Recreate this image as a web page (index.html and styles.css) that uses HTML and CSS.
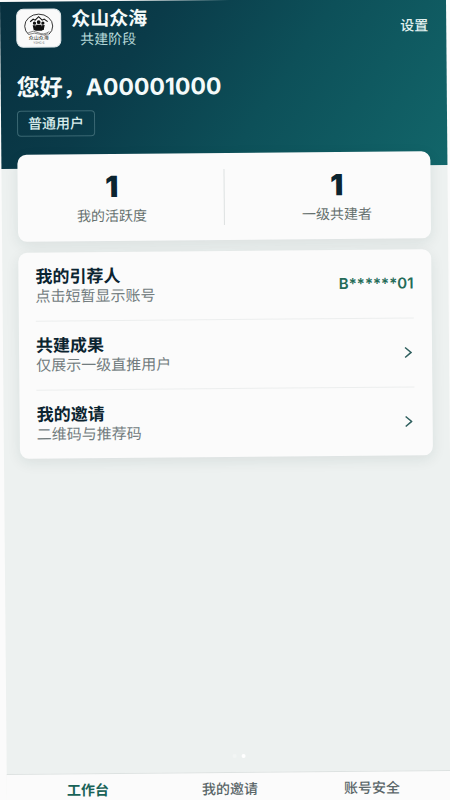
FILE: index.html
```html
<!DOCTYPE html>
<html lang="zh-CN">
<head>
    <meta charset="UTF-8">
    <meta name="viewport" content="width=device-width, initial-scale=1.0">
    <title>众山众海</title>
    <link rel="stylesheet" href="styles.css">
</head>
<body>
    <div class="app">
        <header class="hero">
            <div class="brand">
                <div class="logo">
                    <svg viewBox="0 0 45 39" width="45" height="39" aria-hidden="true">
                        <ellipse cx="22.500" cy="17.500" rx="14" ry="12" fill="none" stroke="#222" stroke-width="0.900"/>
                        <rect x="12" y="26" width="21" height="8" fill="#fafafa"/>
                        <path d="M14 13l3-2.500 2 1 3.500-3.500 3.500 3.500 2-1 3.500 2.500" fill="none" stroke="#111" stroke-width="1.100"/>
                        <g fill="#111">
                            <circle cx="22.500" cy="13.500" r="1.900"/>
                            <circle cx="18.300" cy="14.500" r="1.600"/>
                            <circle cx="26.700" cy="14.500" r="1.600"/>
                            <path d="M20 16h5l1 6h-7zM16.500 16.500h3l.5 5h-2.500zM25.500 16.500h3l-1 5h-2.500z"/>
                        </g>
                        <path d="M12 24q5-3 10 0t11-1M13 25.500q5-2 10 0t9-.500" fill="none" stroke="#555" stroke-width="0.700"/>
                        <text class="logo-name" x="22.500" y="31" text-anchor="middle">众山众海</text>
                        <text class="logo-sub" x="22.500" y="35" text-anchor="middle">YSHC·S</text>
                    </svg>
                </div>
                <div class="brand-text">
                    <div class="brand-name">众山众海</div>
                    <div class="brand-stage">共建阶段</div>
                </div>
                <a class="settings" href="#">设置</a>
            </div>
            <h1 class="greeting">您好，A00001000</h1>
            <span class="badge">普通用户</span>
        </header>

        <main class="content">
            <section class="card stats">
                <div class="stat">
                    <div class="stat-value">1</div>
                    <div class="stat-label">我的活跃度</div>
                </div>
                <div class="stat-divider"></div>
                <div class="stat">
                    <div class="stat-value">1</div>
                    <div class="stat-label">一级共建者</div>
                </div>
            </section>

            <section class="card menu">
                <button class="row" type="button">
                    <span class="row-text">
                        <span class="row-title">我的引荐人</span>
                        <span class="row-desc">点击短暂显示账号</span>
                    </span>
                    <span class="account">B******01</span>
                </button>
                <a class="row" href="#">
                    <span class="row-text">
                        <span class="row-title">共建成果</span>
                        <span class="row-desc">仅展示一级直推用户</span>
                    </span>
                    <svg class="chevron" viewBox="0 0 8 12" width="8" height="12" aria-hidden="true"><path d="M1 1l6 5-6 5"/></svg>
                </a>
                <a class="row" href="#">
                    <span class="row-text">
                        <span class="row-title">我的邀请</span>
                        <span class="row-desc">二维码与推荐码</span>
                    </span>
                    <svg class="chevron" viewBox="0 0 8 12" width="8" height="12" aria-hidden="true"><path d="M1 1l6 5-6 5"/></svg>
                </a>
            </section>

            <div class="dots">
                <span class="dot"></span>
                <span class="dot active"></span>
            </div>
        </main>

        <nav class="tabs">
            <a class="tab active" href="#">工作台</a>
            <a class="tab" href="#">我的邀请</a>
            <a class="tab" href="#">账号安全</a>
        </nav>
    </div>
</body>
</html>
```

FILE: styles.css
```css
* {
    box-sizing: border-box;
}

body {
    margin: 0;
    height: 100vh;
    overflow: hidden;
    background: #fbfbfb;
    font-family: Inter, "Noto Sans CJK SC", sans-serif;
    font-size: 14px;
    line-height: 20px;
    color: #0b2430;
}

a {
    color: inherit;
    text-decoration: none;
}

/* the whole screen leans slightly to the left */
.app {
    display: flex;
    flex-direction: column;
    height: calc(100vh + 6px);
    margin: 2px 4px 0 0;
    background: #edf1f0;
    transform: rotate(-0.5deg);
    transform-origin: 0 0;
}

/* header */
.hero {
    padding: 7px 18px 32px 16px;
    background: linear-gradient(125deg, #08303f 0%, #0a3b49 30%, #0d5059 60%, #12666a 100%);
    color: #f4fafa;
}

.brand {
    display: flex;
    align-items: center;
    height: 39px;
}

.logo {
    width: 45px;
    height: 39px;
    border: 1px solid #dfe7ea;
    border-radius: 7px;
    background: #fafafa;
    overflow: hidden;
}

.logo svg {
    display: block;
    margin: -1px;
}

.logo-name {
    font-size: 5px;
    fill: #222;
}

.logo-sub {
    font-size: 3px;
    fill: #444;
}

.brand-text {
    flex: 1;
    margin-left: 10px;
}

.brand-name {
    font-size: 19px;
    font-weight: 700;
    line-height: 22px;
}

.brand-stage {
    padding-left: 9px;
    line-height: 18px;
    color: #b5d8d8;
}

.settings {
    font-weight: 500;
    color: #e2f1f0;
}

.greeting {
    margin: 25px 0 8px;
    font-size: 23px;
    font-weight: 700;
    line-height: 30px;
}

.badge {
    display: block;
    width: fit-content;
    padding: 2px 10px;
    border: 1px solid #3b6873;
    border-radius: 4px;
    line-height: 20px;
    font-weight: 500;
    color: #d9eeed;
}

/* cards */
.content {
    flex: 1;
    display: flex;
    flex-direction: column;
    gap: 11px;
    padding: 0 17px 0 16px;
}

.card {
    border-radius: 9px;
    background: #fbfbfb;
    box-shadow: 0 4px 14px rgba(20, 50, 50, 0.09);
}

.stats {
    display: flex;
    margin-top: -14px;
    padding: 16px 0 15px;
    text-align: center;
}

.stat {
    flex: 1;
}

.stat-value {
    margin-bottom: 2px;
    font-size: 29px;
    font-weight: 900;
    line-height: 34px;
}

.stat-label {
    color: #66716f;
}

.stat-divider {
    width: 1px;
    margin: 0 18px;
    background: #dde1e1;
}

.menu {
    padding: 0 18px 0 17px;
}

.row {
    display: flex;
    align-items: center;
    justify-content: space-between;
    width: 100%;
    padding: 14px 0;
    border: 0;
    border-bottom: 1px solid #eceeee;
    background: none;
    font: inherit;
    color: inherit;
    text-align: left;
    cursor: pointer;
}

.row:last-child {
    border-bottom: 0;
}

.row-title,
.row-desc {
    display: block;
    line-height: 20px;
}

.row-title {
    font-size: 17px;
    font-weight: 700;
}

.row-desc {
    font-size: 15px;
    color: #727c7e;
}

.account {
    font-size: 15px;
    font-weight: 600;
    color: #246b58;
}

.chevron {
    margin-right: 2px;
    fill: none;
    stroke: #2f5f5e;
    stroke-width: 1.5;
}

.dots {
    display: flex;
    justify-content: center;
    gap: 5px;
    margin-top: auto;
    padding: 0 0 14px 20px;
}

.dot {
    width: 4px;
    height: 4px;
    border-radius: 50%;
    background: #f2f5f4;
}

.dot.active {
    background: #fff;
}

/* bottom tabs */
.tabs {
    display: flex;
    padding: 6px 10px 7px;
    border-top: 1px solid #dde2e1;
    background: #fbfbfb;
}

.tab {
    flex: 1;
    text-align: center;
    font-weight: 500;
    color: #5a6668;
}

.tab.active {
    font-weight: 700;
    color: #186257;
}
```
